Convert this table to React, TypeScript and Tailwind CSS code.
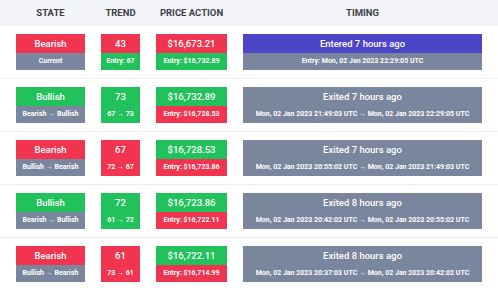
import React from 'react'

type Tone = 'red' | 'green' | 'slate' | 'indigo'

interface Row {
  state: 'Bearish' | 'Bullish'
  stateSub: string
  trend: string
  trendSub: string
  trendTone: Tone
  trendSubTone: Tone
  price: string
  priceSub: string
  priceTone: Tone
  priceSubTone: Tone
  timing: string
  timingSub: string
  timingTone: Tone
}

const TONES: Record<Tone, string> = {
  red: 'bg-[#f1344f]',
  green: 'bg-[#21c25b]',
  slate: 'bg-[#7a859e]',
  indigo: 'bg-[#4c45c7]',
}

const ROWS: Row[] = [
  {
    state: 'Bearish',
    stateSub: 'Current',
    trend: '43',
    trendSub: 'Entry: 67',
    trendTone: 'red',
    trendSubTone: 'green',
    price: '$16,673.21',
    priceSub: 'Entry: $16,732.89',
    priceTone: 'red',
    priceSubTone: 'green',
    timing: 'Entered 7 hours ago',
    timingSub: 'Entry: Mon, 02 Jan 2023 22:29:05 UTC',
    timingTone: 'indigo',
  },
  {
    state: 'Bullish',
    stateSub: 'Bearish → Bullish',
    trend: '73',
    trendSub: '67 → 73',
    trendTone: 'green',
    trendSubTone: 'green',
    price: '$16,732.89',
    priceSub: 'Entry: $16,728.53',
    priceTone: 'green',
    priceSubTone: 'red',
    timing: 'Exited 7 hours ago',
    timingSub: 'Mon, 02 Jan 2023 21:49:03 UTC → Mon, 02 Jan 2023 22:29:05 UTC',
    timingTone: 'slate',
  },
  {
    state: 'Bearish',
    stateSub: 'Bullish → Bearish',
    trend: '67',
    trendSub: '72 → 67',
    trendTone: 'red',
    trendSubTone: 'red',
    price: '$16,728.53',
    priceSub: 'Entry: $16,723.86',
    priceTone: 'green',
    priceSubTone: 'red',
    timing: 'Exited 7 hours ago',
    timingSub: 'Mon, 02 Jan 2023 20:55:02 UTC → Mon, 02 Jan 2023 21:49:03 UTC',
    timingTone: 'slate',
  },
  {
    state: 'Bullish',
    stateSub: 'Bearish → Bullish',
    trend: '72',
    trendSub: '61 → 72',
    trendTone: 'green',
    trendSubTone: 'green',
    price: '$16,723.86',
    priceSub: 'Entry: $16,722.11',
    priceTone: 'green',
    priceSubTone: 'red',
    timing: 'Exited 8 hours ago',
    timingSub: 'Mon, 02 Jan 2023 20:42:02 UTC → Mon, 02 Jan 2023 20:55:02 UTC',
    timingTone: 'slate',
  },
  {
    state: 'Bearish',
    stateSub: 'Bullish → Bearish',
    trend: '61',
    trendSub: '73 → 61',
    trendTone: 'red',
    trendSubTone: 'red',
    price: '$16,722.11',
    priceSub: 'Entry: $16,714.99',
    priceTone: 'green',
    priceSubTone: 'red',
    timing: 'Exited 8 hours ago',
    timingSub: 'Mon, 02 Jan 2023 20:37:03 UTC → Mon, 02 Jan 2023 20:42:02 UTC',
    timingTone: 'slate',
  },
]

function Cell({ top, sub, tone, subTone, width }: { top: string; sub: string; tone: Tone; subTone: Tone; width: string }) {
  return (
    <div className={`${width} shrink-0 flex flex-col text-white text-center`}>
      <div className={`${TONES[tone]} h-[19px] flex items-center justify-center text-[9.5px] font-medium leading-none`}>
        {top}
      </div>
      <div className={`${TONES[subTone]} h-[17px] flex items-center justify-center text-[7px] font-bold leading-none whitespace-nowrap`}>
        {sub}
      </div>
    </div>
  )
}

export default function App() {
  return (
    <div className="w-[498px] h-[290px] bg-white overflow-hidden" style={{ fontFamily: 'Roboto, "Noto Sans", sans-serif' }}>
      {/* Header */}
      <div className="h-[26px] bg-[#f3f4f7] flex items-center gap-4 px-4 text-[9.5px] font-bold text-[#3d4049] uppercase">
        <div className="w-[69px] text-center">State</div>
        <div className="w-[39px] text-center">Trend</div>
        <div className="w-[71px] text-center">Price Action</div>
        <div className="w-[239px] text-center">Timing</div>
      </div>

      {/* Rows */}
      {ROWS.map((row, i) => (
        <div key={i} className="flex gap-4 px-4 py-2 border-b border-[#eceef2]">
          <Cell
            width="w-[69px]"
            top={row.state}
            sub={row.stateSub}
            tone={row.state === 'Bearish' ? 'red' : 'green'}
            subTone="slate"
          />
          <Cell width="w-[39px]" top={row.trend} sub={row.trendSub} tone={row.trendTone} subTone={row.trendSubTone} />
          <Cell width="w-[71px]" top={row.price} sub={row.priceSub} tone={row.priceTone} subTone={row.priceSubTone} />
          <Cell width="w-[239px]" top={row.timing} sub={row.timingSub} tone={row.timingTone} subTone="slate" />
        </div>
      ))}
    </div>
  )
}
